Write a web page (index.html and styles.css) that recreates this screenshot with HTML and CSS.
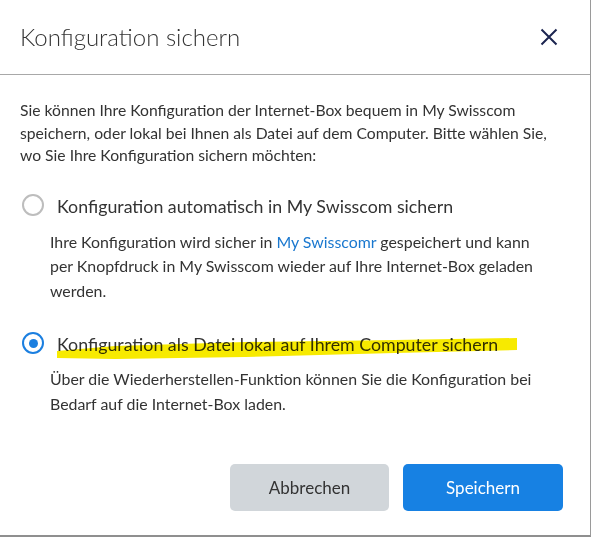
FILE: index.html
```html
<!DOCTYPE html>
<html lang="de">
<head>
<meta charset="utf-8">
<title>Konfiguration sichern</title>
<link rel="stylesheet" href="styles.css">
</head>
<body>
<div class="dialog">
  <div class="header">
    <h1 class="title">Konfiguration sichern</h1>
    <button class="close" aria-label="Schliessen">
      <svg width="18" height="18" viewBox="0 0 18 18"><path d="M1.5 1.5 L16.5 16.5 M16.5 1.5 L1.5 16.5" stroke="#1c2550" stroke-width="2" fill="none"/></svg>
    </button>
  </div>
  <div class="body">
    <p class="intro">Sie können Ihre Konfiguration der Internet-Box bequem in My Swisscom<br>speichern, oder lokal bei Ihnen als Datei auf dem Computer. Bitte wählen Sie,<br>wo Sie Ihre Konfiguration sichern möchten:</p>

    <div class="option opt1">
      <span class="radio"></span>
      <span class="label">Konfiguration automatisch in My Swisscom sichern</span>
    </div>
    <p class="desc d1">Ihre Konfiguration wird sicher in <a class="link">My Swisscomr</a> gespeichert und kann<br>per Knopfdruck in My Swisscom wieder auf Ihre Internet-Box geladen<br>werden.</p>

    <div class="option opt2">
      <span class="radio checked"></span>
      <span class="label">Konfiguration als Datei lokal auf Ihrem Computer sichern</span>
      <svg class="marker" width="470" height="24" viewBox="0 0 470 24"><polygon points="2,14 60,9 190,5 340,3 462,1 462,13 340,16 190,20 60,22 2,21" fill="#f7ea00"/></svg>
    </div>
    <p class="desc d2">Über die Wiederherstellen-Funktion können Sie die Konfiguration bei<br>Bedarf auf die Internet-Box laden.</p>

    <div class="actions">
      <button class="btn btn-secondary">Abbrechen</button>
      <button class="btn btn-primary">Speichern</button>
    </div>
  </div>
</div>
</body>
</html>
```

FILE: styles.css
```css
html, body {
  margin: 0;
  padding: 0;
  background: #ffffff;
}
body {
  font-family: Lato, "Open Sans", sans-serif;
  color: #333333;
}
.dialog {
  width: 590px;
  height: 535px;
  border-right: 1px solid #9a9a9a;
  border-bottom: 2px solid #8f8f8f;
  background: #fff;
  display: flex;
  flex-direction: column;
}
.header {
  height: 74px;
  border-bottom: 1px solid #a8a8a8;
  display: flex;
  align-items: center;
  justify-content: space-between;
  padding: 0 32px 0 20px;
}
.title {
  margin: 0;
  font-weight: 300;
  font-size: 24px;
  color: #333;
  padding-bottom: 2px;
}
.close {
  border: 0;
  background: none;
  padding: 0;
  width: 18px;
  height: 18px;
  display: flex;
}
.body {
  padding: 0 27px 0 20px;
  display: flex;
  flex-direction: column;
}
.intro {
  margin: 24px 0 0 0;
  font-size: 15.7px;
  line-height: 22.5px;
  white-space: nowrap;
}
.option {
  position: relative;
  display: flex;
  align-items: center;
  gap: 13px;
  height: 24px;
  padding-left: 2px;
}
.opt1 { margin-top: 27px; }
.opt2 { margin-top: 29px; }
.radio {
  width: 18px;
  height: 18px;
  border: 2px solid #bdbdbd;
  border-radius: 50%;
  box-sizing: content-box;
  display: flex;
  align-items: center;
  justify-content: center;
  margin-top: -2px;
}
.radio.checked {
  border-color: #1b7fe0;
}
.radio.checked::after {
  content: "";
  width: 9px;
  height: 9px;
  border-radius: 50%;
  background: #1b7fe0;
}
.label {
  font-size: 17.8px;
  line-height: 24px;
  white-space: nowrap;
}
.marker {
  position: absolute;
  left: 35px;
  top: 5px;
  mix-blend-mode: multiply;
  pointer-events: none;
}
.desc {
  margin: 0;
  padding-left: 30px;
  font-size: 15.9px;
  line-height: 24.5px;
  white-space: nowrap;
}
.d1 { margin-top: 12px; }
.d2 { margin-top: 11px; }
.link {
  color: #1a78cf;
  text-decoration: none;
}
.actions {
  margin-top: 48px;
  display: flex;
  justify-content: flex-end;
  gap: 14px;
}
.btn {
  width: 160px;
  height: 47px;
  border: 0;
  border-radius: 5px;
  font-family: Lato, "Open Sans", sans-serif;
  font-size: 17px;
  cursor: pointer;
}
.btn-secondary {
  background: #d1d6da;
  color: #333;
  width: 159px;
}
.btn-primary {
  background: #1781e3;
  color: #fff;
}
```
